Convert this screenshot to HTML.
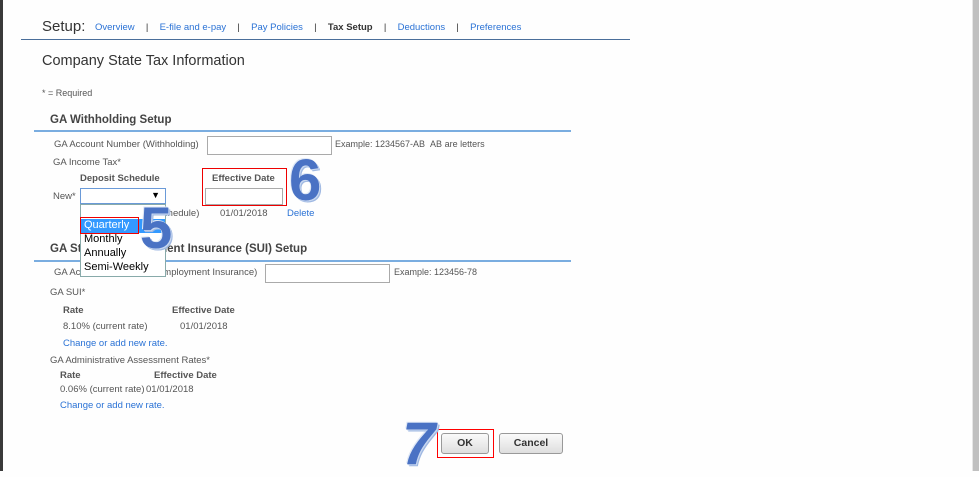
<!DOCTYPE html>
<html><head><meta charset="utf-8"><style>
body{margin:0;width:979px;height:471px;background:#fefefe;position:relative;overflow:hidden;font-family:"Liberation Sans",sans-serif;color:#555;font-size:9.5px}
.a{position:absolute;white-space:nowrap;line-height:1}
.lk{color:#2a72d5}
.h{font-family:"Liberation Sans",sans-serif;color:#333}
.b{font-weight:bold;color:#555}
.inp{position:absolute;border:1px solid #aaa;background:#fff;box-sizing:border-box}
.red{position:absolute;border:1px solid #e00;box-sizing:border-box;z-index:5}
.num{position:absolute;font-family:"Liberation Sans",sans-serif;font-weight:bold;color:#4a72c4;line-height:1;z-index:6;text-shadow:1px 1px 0 #c9d8f0,2px 2px 0 #9fb8e2,-1px -1px 0 #dfe8f6}
.btn{position:absolute;border:1px solid #999;border-radius:3px;background:linear-gradient(#fafafa,#dedede);box-sizing:border-box;font-weight:bold;font-size:10.5px;color:#333;text-align:center}
.sep{display:inline-block;width:25px;text-align:center;color:#333}
</style></head><body>
<div style="position:absolute;left:0;top:0;width:3px;height:471px;background:#3a3a3a"></div>
<div style="position:absolute;left:972px;top:0;width:1px;height:471px;background:#e6e6e6"></div>
<div style="position:absolute;left:973px;top:0;width:6px;height:471px;background:#c0c0c0"></div>

<div class="a h" style="left:42px;top:19px;font-size:15px">Setup:</div>
<div class="a" style="left:95px;top:23px;font-size:9.5px;color:#333"><span class="lk">Overview</span><span class="sep">|</span><span class="lk">E-file and e-pay</span><span class="sep">|</span><span class="lk">Pay Policies</span><span class="sep">|</span><b>Tax Setup</b><span class="sep">|</span><span class="lk">Deductions</span><span class="sep">|</span><span class="lk">Preferences</span></div>
<div style="position:absolute;left:21px;top:39px;width:609px;height:1px;background:#4a6e9a"></div>

<div class="a h" style="left:42px;top:54px;font-size:14.5px">Company State Tax Information</div>
<div class="a" style="left:42px;top:89px;font-size:9px">* = Required</div>

<div class="a h" style="left:50px;top:115px;font-size:11.5px;font-weight:bold;color:#444">GA Withholding Setup</div>
<div style="position:absolute;left:34px;top:130px;width:537px;height:2px;background:#7aade0"></div>
<div class="a" style="left:54px;top:140px">GA Account Number (Withholding)</div>
<div class="inp" style="left:207px;top:136px;width:125px;height:19px"></div>
<div class="a" style="left:335px;top:140px;font-size:9px">Example: 1234567-AB &nbsp;AB are letters</div>

<div class="a" style="left:53px;top:158px">GA Income Tax*</div>
<div class="a b" style="left:80px;top:174px">Deposit Schedule</div>
<div class="red" style="left:202px;top:168px;width:85px;height:38px"></div>
<div class="a b" style="left:212px;top:174px">Effective Date</div>
<div class="a" style="left:53px;top:192px">New*</div>
<div class="inp" style="left:80px;top:188px;width:86px;height:16px;border-color:#6a9ad8"><span style="position:absolute;right:5px;top:1px;font-size:9px;color:#000">▼</span></div>
<div class="inp" style="left:205px;top:188px;width:78px;height:17px"></div>
<div class="a" style="left:155px;top:209px">(schedule)</div>
<div class="a" style="left:220px;top:209px">01/01/2018</div>
<div class="a lk" style="left:287px;top:209px">Delete</div>

<div class="a h" style="left:50px;top:244px;font-size:11.5px;font-weight:bold;color:#444">GA State Unemployment Insurance (SUI) Setup</div>
<div style="position:absolute;left:34px;top:260px;width:537px;height:2px;background:#7aade0"></div>
<div class="a" style="left:54px;top:268px">GA Account Number (Unemployment Insurance)</div>
<div class="inp" style="left:265px;top:264px;width:125px;height:19px"></div>
<div class="a" style="left:394px;top:268px;font-size:9px">Example: 123456-78</div>

<div class="inp" style="left:80px;top:204px;width:86px;height:73px;border-color:#8aa;background:#fff;z-index:3">
<div style="position:absolute;left:0;top:14px;width:84px;height:14px;background:#3399ff"></div>
<div class="a" style="left:3px;top:15px;font-size:11px;color:#fff">Quarterly</div>
<div class="a" style="left:3px;top:29px;font-size:11px;color:#000">Monthly</div>
<div class="a" style="left:3px;top:43px;font-size:11px;color:#000">Annually</div>
<div class="a" style="left:3px;top:57px;font-size:11px;color:#000">Semi-Weekly</div>
</div>
<div class="red" style="left:80px;top:217px;width:59px;height:17px"></div>

<div class="a" style="left:50px;top:288px">GA SUI*</div>
<div class="a b" style="left:63px;top:306px">Rate</div>
<div class="a b" style="left:172px;top:306px">Effective Date</div>
<div class="a" style="left:63px;top:322px">8.10% (current rate)</div>
<div class="a" style="left:180px;top:322px">01/01/2018</div>
<div class="a lk" style="left:63px;top:339px">Change or add new rate.</div>
<div class="a" style="left:50px;top:356px">GA Administrative Assessment Rates*</div>
<div class="a b" style="left:60px;top:371px">Rate</div>
<div class="a b" style="left:154px;top:371px">Effective Date</div>
<div class="a" style="left:60px;top:385px">0.06% (current rate)</div>
<div class="a" style="left:146px;top:385px">01/01/2018</div>
<div class="a lk" style="left:60px;top:401px">Change or add new rate.</div>

<div class="btn" style="left:441px;top:433px;width:48px;height:21px;line-height:19px">OK</div>
<div class="btn" style="left:499px;top:433px;width:64px;height:21px;line-height:19px">Cancel</div>
<div class="red" style="left:437px;top:429px;width:57px;height:29px;border-color:#f00"></div>

<div class="num" style="left:289px;top:152px;font-size:58px">6</div>
<div class="num" style="left:140px;top:200px;font-size:58px">5</div>
<div class="num" style="left:402px;top:414px;font-size:60px;font-style:italic">7</div>
</body></html>
